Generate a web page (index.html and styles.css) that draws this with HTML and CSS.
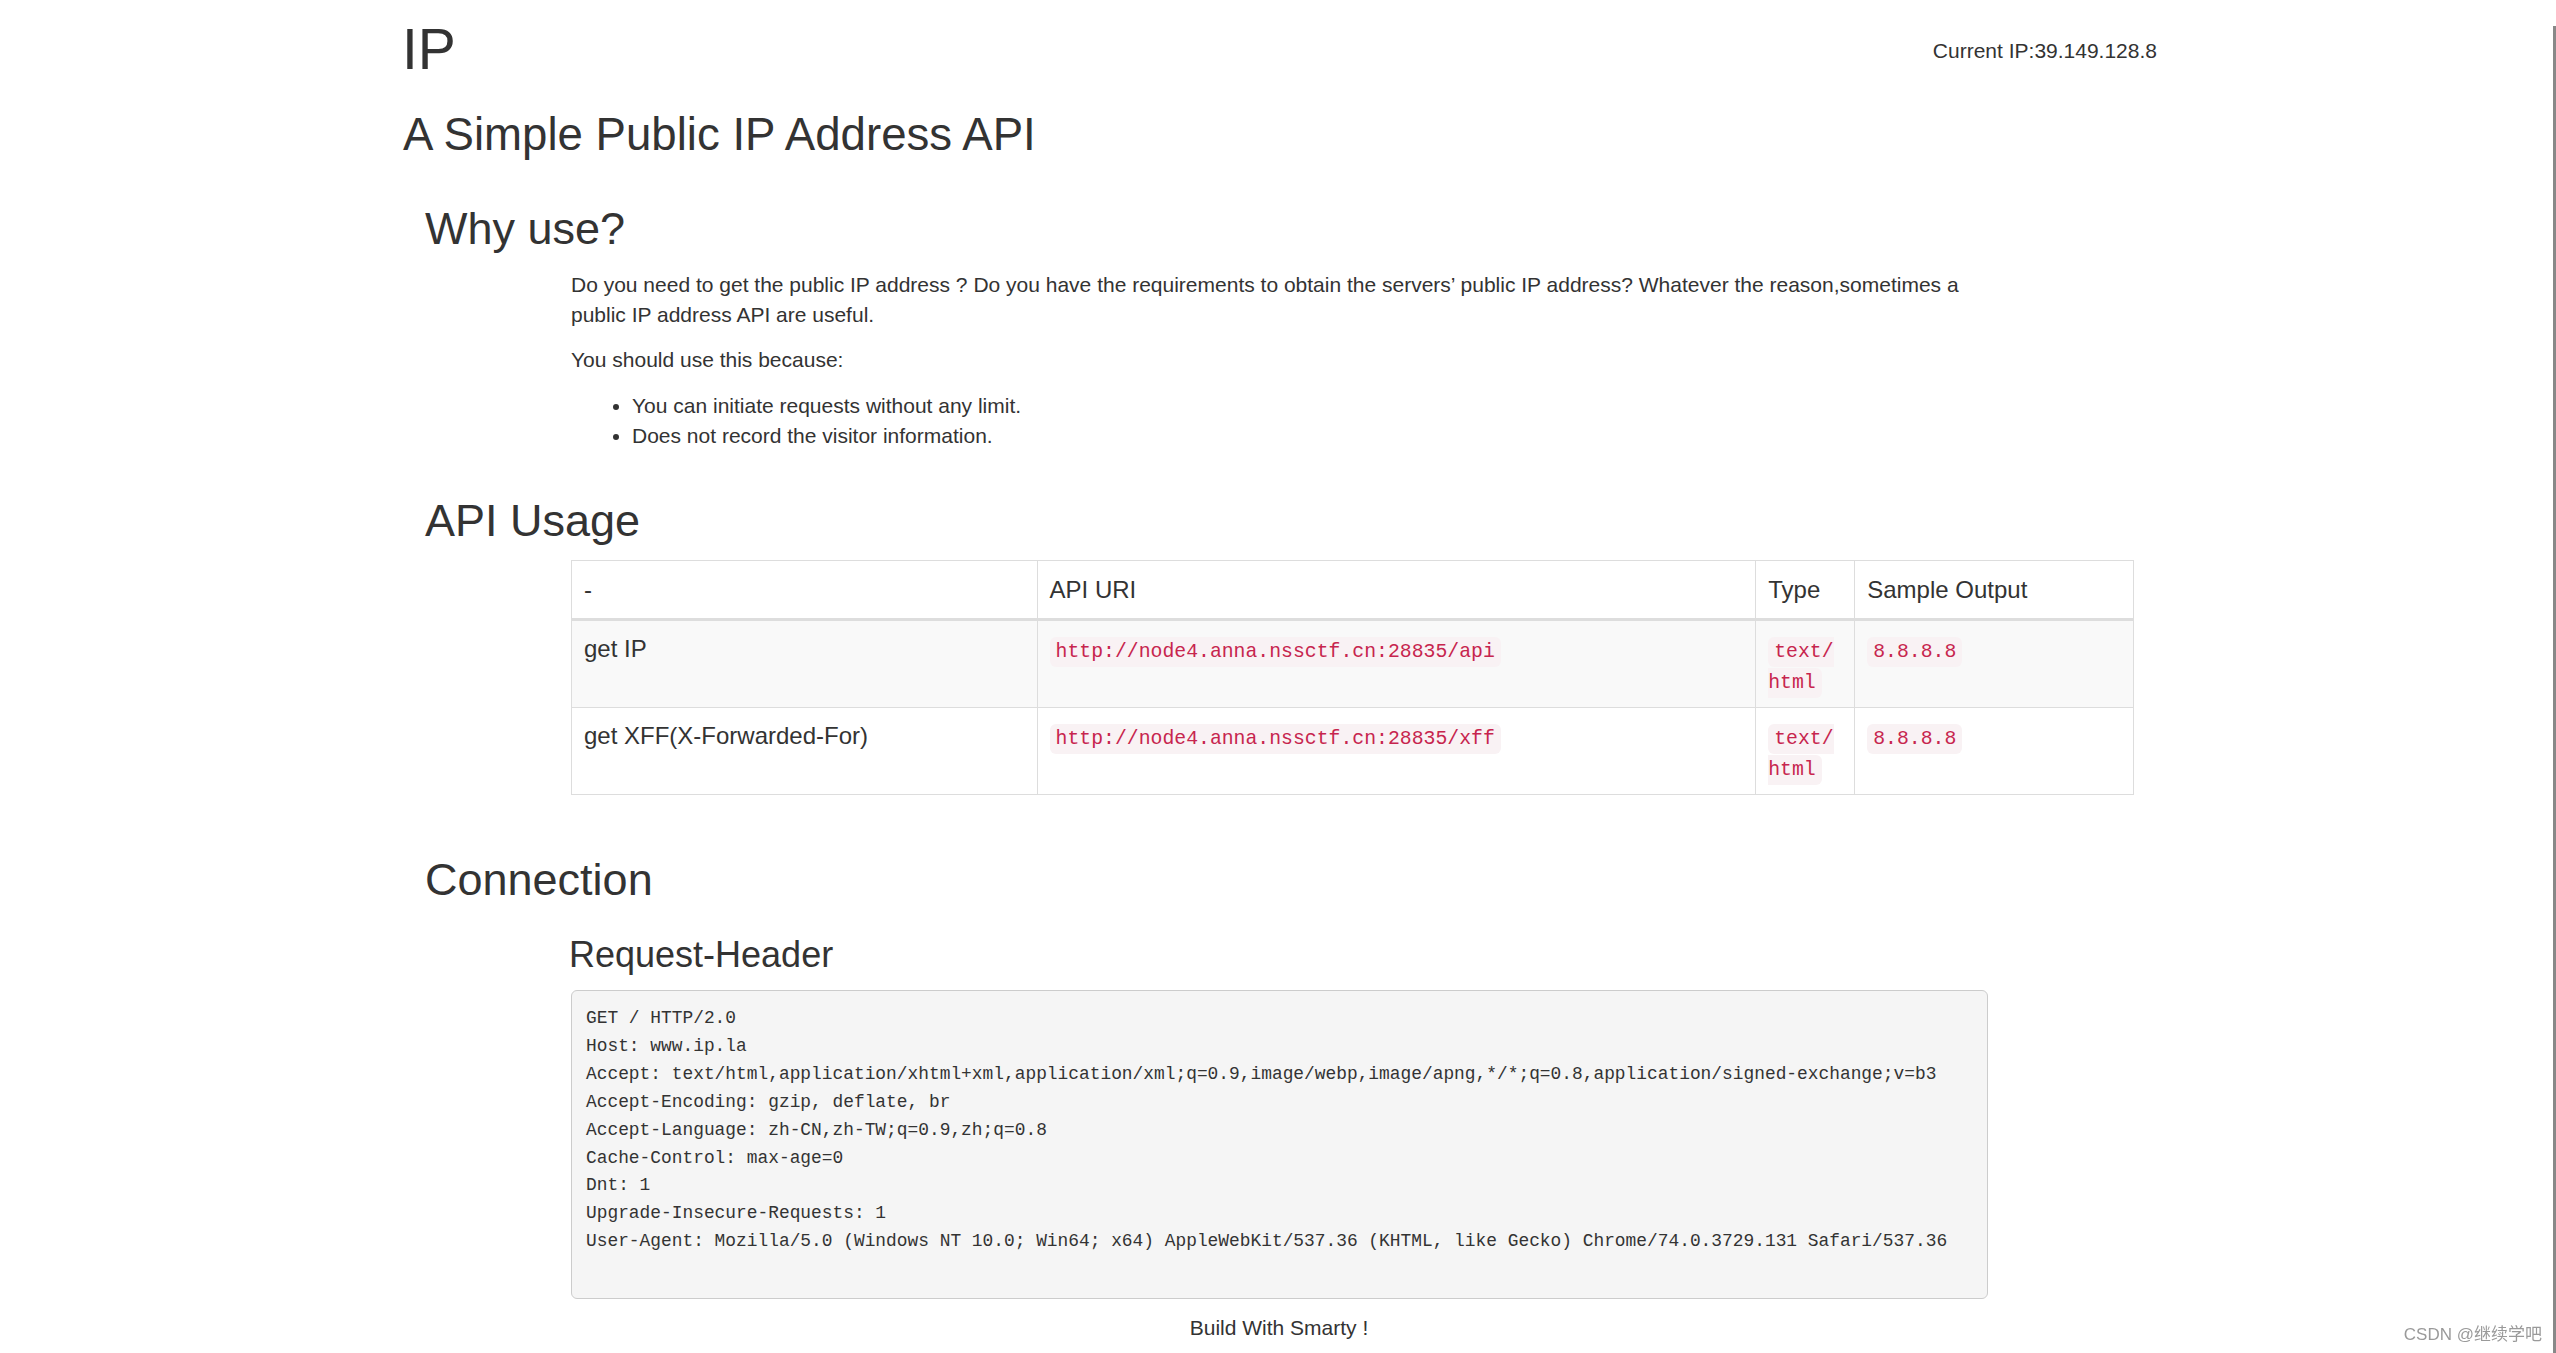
FILE: index.html
```html
<!DOCTYPE html>
<html lang="en">
<head>
<meta charset="utf-8">
<title>IP</title>
<link rel="stylesheet" href="styles.css">
</head>
<body>
<div class="container">
  <header class="page-header">
    <h1 class="title">IP</h1>
    <div class="current-ip">Current IP:39.149.128.8</div>
  </header>
  <h2 class="subtitle">A Simple Public IP Address API</h2>

  <section class="section section-why">
    <h2 class="section-title">Why use?</h2>
    <div class="section-body">
      <p class="text">Do you need to get the public IP address ? Do you have the requirements to obtain the servers’ public IP address? Whatever the reason,sometimes a public IP address API are useful.</p>
      <p class="text">You should use this because:</p>
      <ul class="list">
        <li>You can initiate requests without any limit.</li>
        <li>Does not record the visitor information.</li>
      </ul>
    </div>
  </section>

  <section class="section section-api">
    <h2 class="section-title">API Usage</h2>
    <div class="section-body">
      <table class="api-table">
        <colgroup>
          <col class="c1"><col class="c2"><col class="c3"><col class="c4">
        </colgroup>
        <thead>
          <tr><th>-</th><th>API URI</th><th>Type</th><th>Sample Output</th></tr>
        </thead>
        <tbody>
          <tr class="striped">
            <td>get IP</td>
            <td><code class="code">http://node4.anna.nssctf.cn:28835/api</code></td>
            <td><code class="code">text/<wbr>html</code></td>
            <td><code class="code">8.8.8.8</code></td>
          </tr>
          <tr>
            <td>get XFF(X-Forwarded-For)</td>
            <td><code class="code">http://node4.anna.nssctf.cn:28835/xff</code></td>
            <td><code class="code">text/<wbr>html</code></td>
            <td><code class="code">8.8.8.8</code></td>
          </tr>
        </tbody>
      </table>
    </div>
  </section>

  <section class="section section-conn">
    <h2 class="section-title">Connection</h2>
    <div class="section-body">
      <h3 class="sub-title">Request-Header</h3>
<pre class="headers">GET / HTTP/2.0
Host: www.ip.la
Accept: text/html,application/xhtml+xml,application/xml;q=0.9,image/webp,image/apng,*/*;q=0.8,application/signed-exchange;v=b3
Accept-Encoding: gzip, deflate, br
Accept-Language: zh-CN,zh-TW;q=0.9,zh;q=0.8
Cache-Control: max-age=0
Dnt: 1
Upgrade-Insecure-Requests: 1
User-Agent: Mozilla/5.0 (Windows NT 10.0; Win64; x64) AppleWebKit/537.36 (KHTML, like Gecko) Chrome/74.0.3729.131 Safari/537.36
<span class="blank"> </span></pre>
    </div>
  </section>

  <footer class="footer">Build With Smarty !</footer>
</div>
<div class="watermark">CSDN @继续学吧</div>
<div class="scrollbar"></div>
</body>
</html>
```

FILE: styles.css
```css
html, body {
  margin: 0;
  padding: 0;
  background: #fff;
  overflow: hidden;
}

body {
  font-family: "Liberation Sans", Arial, "Noto Sans CJK SC", sans-serif;
  font-size: 21px;
  line-height: 30px;
  color: #333;
}

.container {
  width: 1758px;
  margin: 0 auto;
}

.page-header {
  display: flex;
  justify-content: space-between;
  align-items: flex-start;
  padding-top: 18px;
}

.title {
  margin: 0 0 0 3px;
  font-size: 57px;
  line-height: 62.7px;
  font-weight: normal;
}

.current-ip {
  margin-top: 18px;
  font-size: 21px;
  line-height: 30px;
}

.subtitle {
  margin: 29px 0 0 4px;
  font-size: 45.6px;
  line-height: 49.5px;
  font-weight: normal;
}

.section-title {
  margin: 0 0 0 26px;
  font-size: 45px;
  line-height: 49.5px;
  font-weight: normal;
}

.section-why { margin-top: 45px; }
.section-api { margin-top: 45px; }
.section-conn { margin-top: 60px; }

.section-body {
  margin-left: 172px;
}

.section-why .section-body { padding-top: 16px; }
.section-api .section-body { padding-top: 15px; }
.section-conn .section-body { padding-top: 30px; }

.text {
  width: 1417px;
  margin: 0 0 15.5px;
}

.list {
  margin: 0;
  padding-left: 61px;
}

/* table */
.api-table {
  width: 1563px;
  border-collapse: collapse;
  border: 1px solid #ddd;
  font-size: 24px;
  line-height: 31px;
}

.api-table col.c1 { width: 466px; }
.api-table col.c2 { width: 719px; }
.api-table col.c3 { width: 99px; }
.api-table col.c4 { width: 279px; }

.api-table th,
.api-table td {
  border: 1px solid #ddd;
  padding: 12px;
  text-align: left;
  vertical-align: top;
  font-weight: normal;
}

.api-table thead th {
  line-height: 33px;
  border-bottom: 3px solid #ddd;
}

.api-table tr.striped td {
  background: #f9f9f9;
}

.code {
  font-family: "Liberation Mono", "DejaVu Sans Mono", monospace;
  font-size: 19.8px;
  line-height: 1;
  color: #c7254e;
  background: #f9f2f4;
  padding: 4px 6px;
  border-radius: 6px;
}

/* connection */
.sub-title {
  margin: 0;
  font-size: 36px;
  line-height: 39.6px;
  font-weight: normal;
  margin-left: -2px;
}

.headers {
  width: 1417px;
  box-sizing: border-box;
  margin: 16px 0 0;
  padding: 14px;
  background: #f5f5f5;
  border: 1px solid #ccc;
  border-radius: 6px;
  font-family: "Liberation Mono", "DejaVu Sans Mono", monospace;
  font-size: 17.87px;
  line-height: 27.86px;
  color: #333;
  white-space: pre;
}

.footer {
  margin-top: 14px;
  text-align: center;
  font-size: 21px;
  line-height: 30px;
  padding-left: 2px;
}

.watermark {
  position: fixed;
  right: 14px;
  bottom: 8px;
  font-family: "Liberation Sans", "Noto Sans CJK SC", sans-serif;
  font-size: 17px;
  line-height: 20px;
  color: #9a9a9a;
}

.scrollbar {
  position: fixed;
  top: 26px;
  right: 0;
  width: 3px;
  bottom: 0;
  background: #888;
}
```
